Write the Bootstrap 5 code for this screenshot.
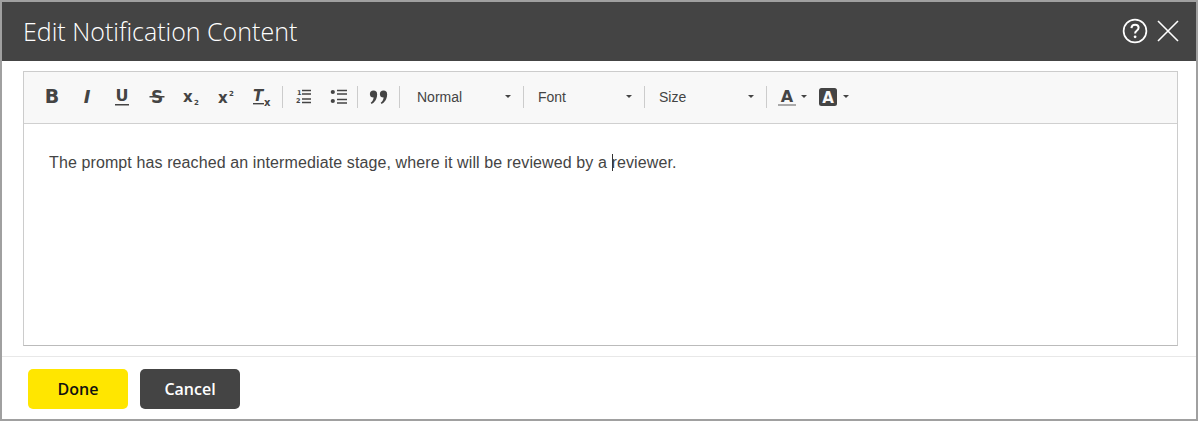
<!DOCTYPE html>
<html lang="en">
<head>
<meta charset="utf-8">
<title>Edit Notification Content</title>
<link href="https://cdn.jsdelivr.net/npm/bootstrap@5.3.0/dist/css/bootstrap.min.css" rel="stylesheet">
<style>
html,body{height:100%;margin:0;background:#fff;overflow:hidden}
.dlg-frame{width:1198px;height:421px;border:2px solid #a0a0a0;background:#fff;font-family:"Open Sans",sans-serif}
.dlg-head{flex:none;height:59px;background:#444;color:#fff;padding:0 17px 0 21px}
.dlg-title{font-family:"Open Sans",sans-serif;font-weight:300;font-size:25px;line-height:1;margin:0;color:#fff}
.head-btn{background:none;border:0;padding:0;line-height:0}
.head-tools{gap:9px;margin-top:-2px}
.dlg-body{flex:none;height:296px;padding:10px 18px 10px 21px;border-bottom:1px solid #e8e8e8}
.edit-box{height:275px;border:1px solid #ccc;border-bottom-color:#bbb}
.edit-bar{height:52px;background:#f8f8f8;border-bottom:1px solid #d0d0d0;padding:0 0 2px 10px;color:#444}
.ti{width:35px;height:24px;background:none;border:0;padding:0;color:#444;line-height:0;flex:none}
.ti svg{display:block;margin:auto;overflow:visible}
.ti-sep{width:1px;height:22px;background:#ccc;flex:none}
.sep-a{margin:0 3px}
.sep-c{margin-left:1px}
.sep-b{margin-left:3px}
.ti-quote{margin-left:3px}
.ti-fore{width:30px;margin-left:10px}
.ti-back{width:32px;margin-left:10px}
.g{font-family:"DejaVu Sans",sans-serif;font-weight:700;fill:#444}
.pick{flex:none;font:14px/1 "Liberation Sans",sans-serif;color:#444;background:none;border:0;padding:0 12px 0 17px;height:24px;width:123px}
.pick-wide{width:120px;padding-left:14px;padding-right:12px}
.pick-wide2{width:121px;padding-left:14px;padding-right:12px}
.pick-caret{width:0;height:0;border-left:3px solid transparent;border-right:3px solid transparent;border-top:3px solid #444}
.edit-area{padding:29px 25px;font:16px/20px "Liberation Sans",sans-serif;color:#444;letter-spacing:.11px;white-space:nowrap}
.cursor{display:inline-block;width:1px;height:17px;background:#333;vertical-align:-3px;margin-right:-1px}
.dlg-foot{flex:none;padding:12px 26px;gap:12px}
.act-btn{width:100px;height:40px;border-radius:5px;font:600 16px/1 "Open Sans",sans-serif;border:0;padding:0}
.act-done{background:#ffe600;color:#111}
.act-done:hover,.act-done:active{background:#ffe600!important;color:#111!important}
.act-cancel{background:#444;color:#fff}
.act-cancel:hover,.act-cancel:active{background:#444!important;color:#fff!important}
</style>
</head>
<body>
<div class="dlg-frame d-flex flex-column">
  <header class="dlg-head d-flex align-items-center justify-content-between">
    <h1 class="dlg-title">Edit Notification Content</h1>
    <div class="head-tools d-flex align-items-center">
      <button class="head-btn" type="button" aria-label="Help"><svg width="26" height="26" viewBox="0 0 26 26"><circle cx="13" cy="13" r="11.4" fill="none" stroke="#fff" stroke-width="1.7"/><path d="M9.4 10.2c.2-2.2 1.7-3.4 3.7-3.4s3.5 1.2 3.5 3c0 1.500-.9 2.200-1.900 2.900-1 .7-1.600 1.300-1.600 2.700" fill="none" stroke="#fff" stroke-width="2"/><circle cx="13.100" cy="18.800" r="1.400" fill="#fff"/></svg></button>
      <button class="head-btn" type="button" aria-label="Close"><svg width="22" height="22" viewBox="0 0 22 22"><path d="M1 1l20 20M21 1L1 21" stroke="#fff" stroke-width="1.600" fill="none"/></svg></button>
    </div>
  </header>
  <main class="dlg-body">
    <div class="edit-box">
      <div class="edit-bar d-flex align-items-center">
        <button class="ti" type="button" aria-label="Bold"><svg width="20" height="20" viewBox="0 0 20 20"><text class="g" x="10" y="16" text-anchor="middle" font-size="19">B</text></svg></button>
        <button class="ti" type="button" aria-label="Italic"><svg width="20" height="20" viewBox="0 0 20 20"><text class="g" x="10" y="16" text-anchor="middle" font-size="18" font-style="italic">I</text></svg></button>
        <button class="ti" type="button" aria-label="Underline"><svg width="18" height="20" viewBox="0 0 18 20"><text class="g" x="9" y="14" text-anchor="middle" font-size="16">U</text><rect x="2" y="17" width="14" height="1.500" fill="#444"/></svg></button>
        <button class="ti" type="button" aria-label="Strike"><svg width="18" height="20" viewBox="0 0 18 20"><text class="g" x="9" y="16" text-anchor="middle" font-size="17">S</text><rect x="1.500" y="9" width="15" height="1.500" fill="#444"/></svg></button>
        <button class="ti" type="button" aria-label="Subscript"><svg width="20" height="20" viewBox="0 0 20 20"><text class="g" x="1" y="15" font-size="15">x</text><text class="g" x="12" y="18" font-size="7">2</text></svg></button>
        <button class="ti" type="button" aria-label="Superscript"><svg width="20" height="20" viewBox="0 0 20 20"><text class="g" x="1" y="16" font-size="15">x</text><text class="g" x="12" y="9" font-size="7">2</text></svg></button>
        <button class="ti" type="button" aria-label="Clear format"><svg width="20" height="20" viewBox="0 0 20 20"><text class="g" x="1" y="14" font-size="15" font-style="italic">T</text><rect x="1" y="16" width="11" height="1.400" fill="#444"/><text class="g" x="12" y="19" font-size="10">x</text></svg></button>
        <span class="ti-sep sep-a"></span>
        <button class="ti" type="button" aria-label="Ordered list"><svg width="18" height="18" viewBox="0 0 18 18"><text class="g" x="2" y="7" font-size="6.500" font-weight="400">1</text><text class="g" x="1" y="15" font-size="6.500" font-weight="400">2</text><path d="M7 2.500h9M7 6h9M7 11h9M7 14.500h9" stroke="#444" stroke-width="1.300"/></svg></button>
        <button class="ti" type="button" aria-label="Bullet list"><svg width="18" height="18" viewBox="0 0 18 18"><circle cx="2.800" cy="4" r="2.100" fill="#444"/><circle cx="2.800" cy="13" r="2.100" fill="#444"/><path d="M7 2.500h10M7 6h10M7 11.500h10M7 15h10" stroke="#444" stroke-width="1.300"/></svg></button>
        <span class="ti-sep sep-c"></span>
        <button class="ti ti-quote" type="button" aria-label="Quote"><svg width="20" height="16" viewBox="0 0 20 16"><circle cx="4.500" cy="5" r="3.600" fill="#444"/><path d="M8.100 5c.2 4.500-2.300 8.500-5.500 10l-.9-1.200c1.700-1.300 2.800-3 2.900-5.600z" fill="#444"/><circle cx="14.500" cy="5" r="3.600" fill="#444"/><path d="M18.100 5c.2 4.500-2.300 8.500-5.500 10l-.9-1.200c1.700-1.300 2.800-3 2.900-5.600z" fill="#444"/></svg></button>
        <span class="ti-sep sep-b"></span>
        <button class="pick d-flex align-items-center justify-content-between" type="button"><span>Normal</span><span class="pick-caret"></span></button>
        <span class="ti-sep"></span>
        <button class="pick pick-wide d-flex align-items-center justify-content-between" type="button"><span>Font</span><span class="pick-caret"></span></button>
        <span class="ti-sep"></span>
        <button class="pick pick-wide2 d-flex align-items-center justify-content-between" type="button"><span>Size</span><span class="pick-caret"></span></button>
        <span class="ti-sep"></span>
        <button class="ti ti-fore d-flex align-items-center" type="button" aria-label="Text colour"><svg width="20" height="20" viewBox="0 0 20 20"><text class="g" x="10" y="15" text-anchor="middle" font-size="16">A</text><rect x="1" y="17" width="18" height="2" fill="#aaa"/></svg><span class="pick-caret ms-1"></span></button>
        <button class="ti ti-back d-flex align-items-center" type="button" aria-label="Background colour"><svg width="18" height="18" viewBox="0 0 18 18"><rect width="18" height="18" rx="2.500" fill="#444"/><text x="9" y="14.500" text-anchor="middle" font-size="15" font-weight="700" font-family="DejaVu Sans" fill="#f8f8f8">A</text></svg><span class="pick-caret ms-1"></span></button>
      </div>
      <div class="edit-area">The prompt has reached an intermediate stage, where it will be reviewed by a <span class="cursor"></span>reviewer.</div>
    </div>
  </main>
  <footer class="dlg-foot d-flex">
    <button class="btn act-btn act-done" type="button">Done</button>
    <button class="btn act-btn act-cancel" type="button">Cancel</button>
  </footer>
</div>
<script src="https://cdn.jsdelivr.net/npm/bootstrap@5.3.0/dist/js/bootstrap.bundle.min.js"></script>
</body>
</html>
